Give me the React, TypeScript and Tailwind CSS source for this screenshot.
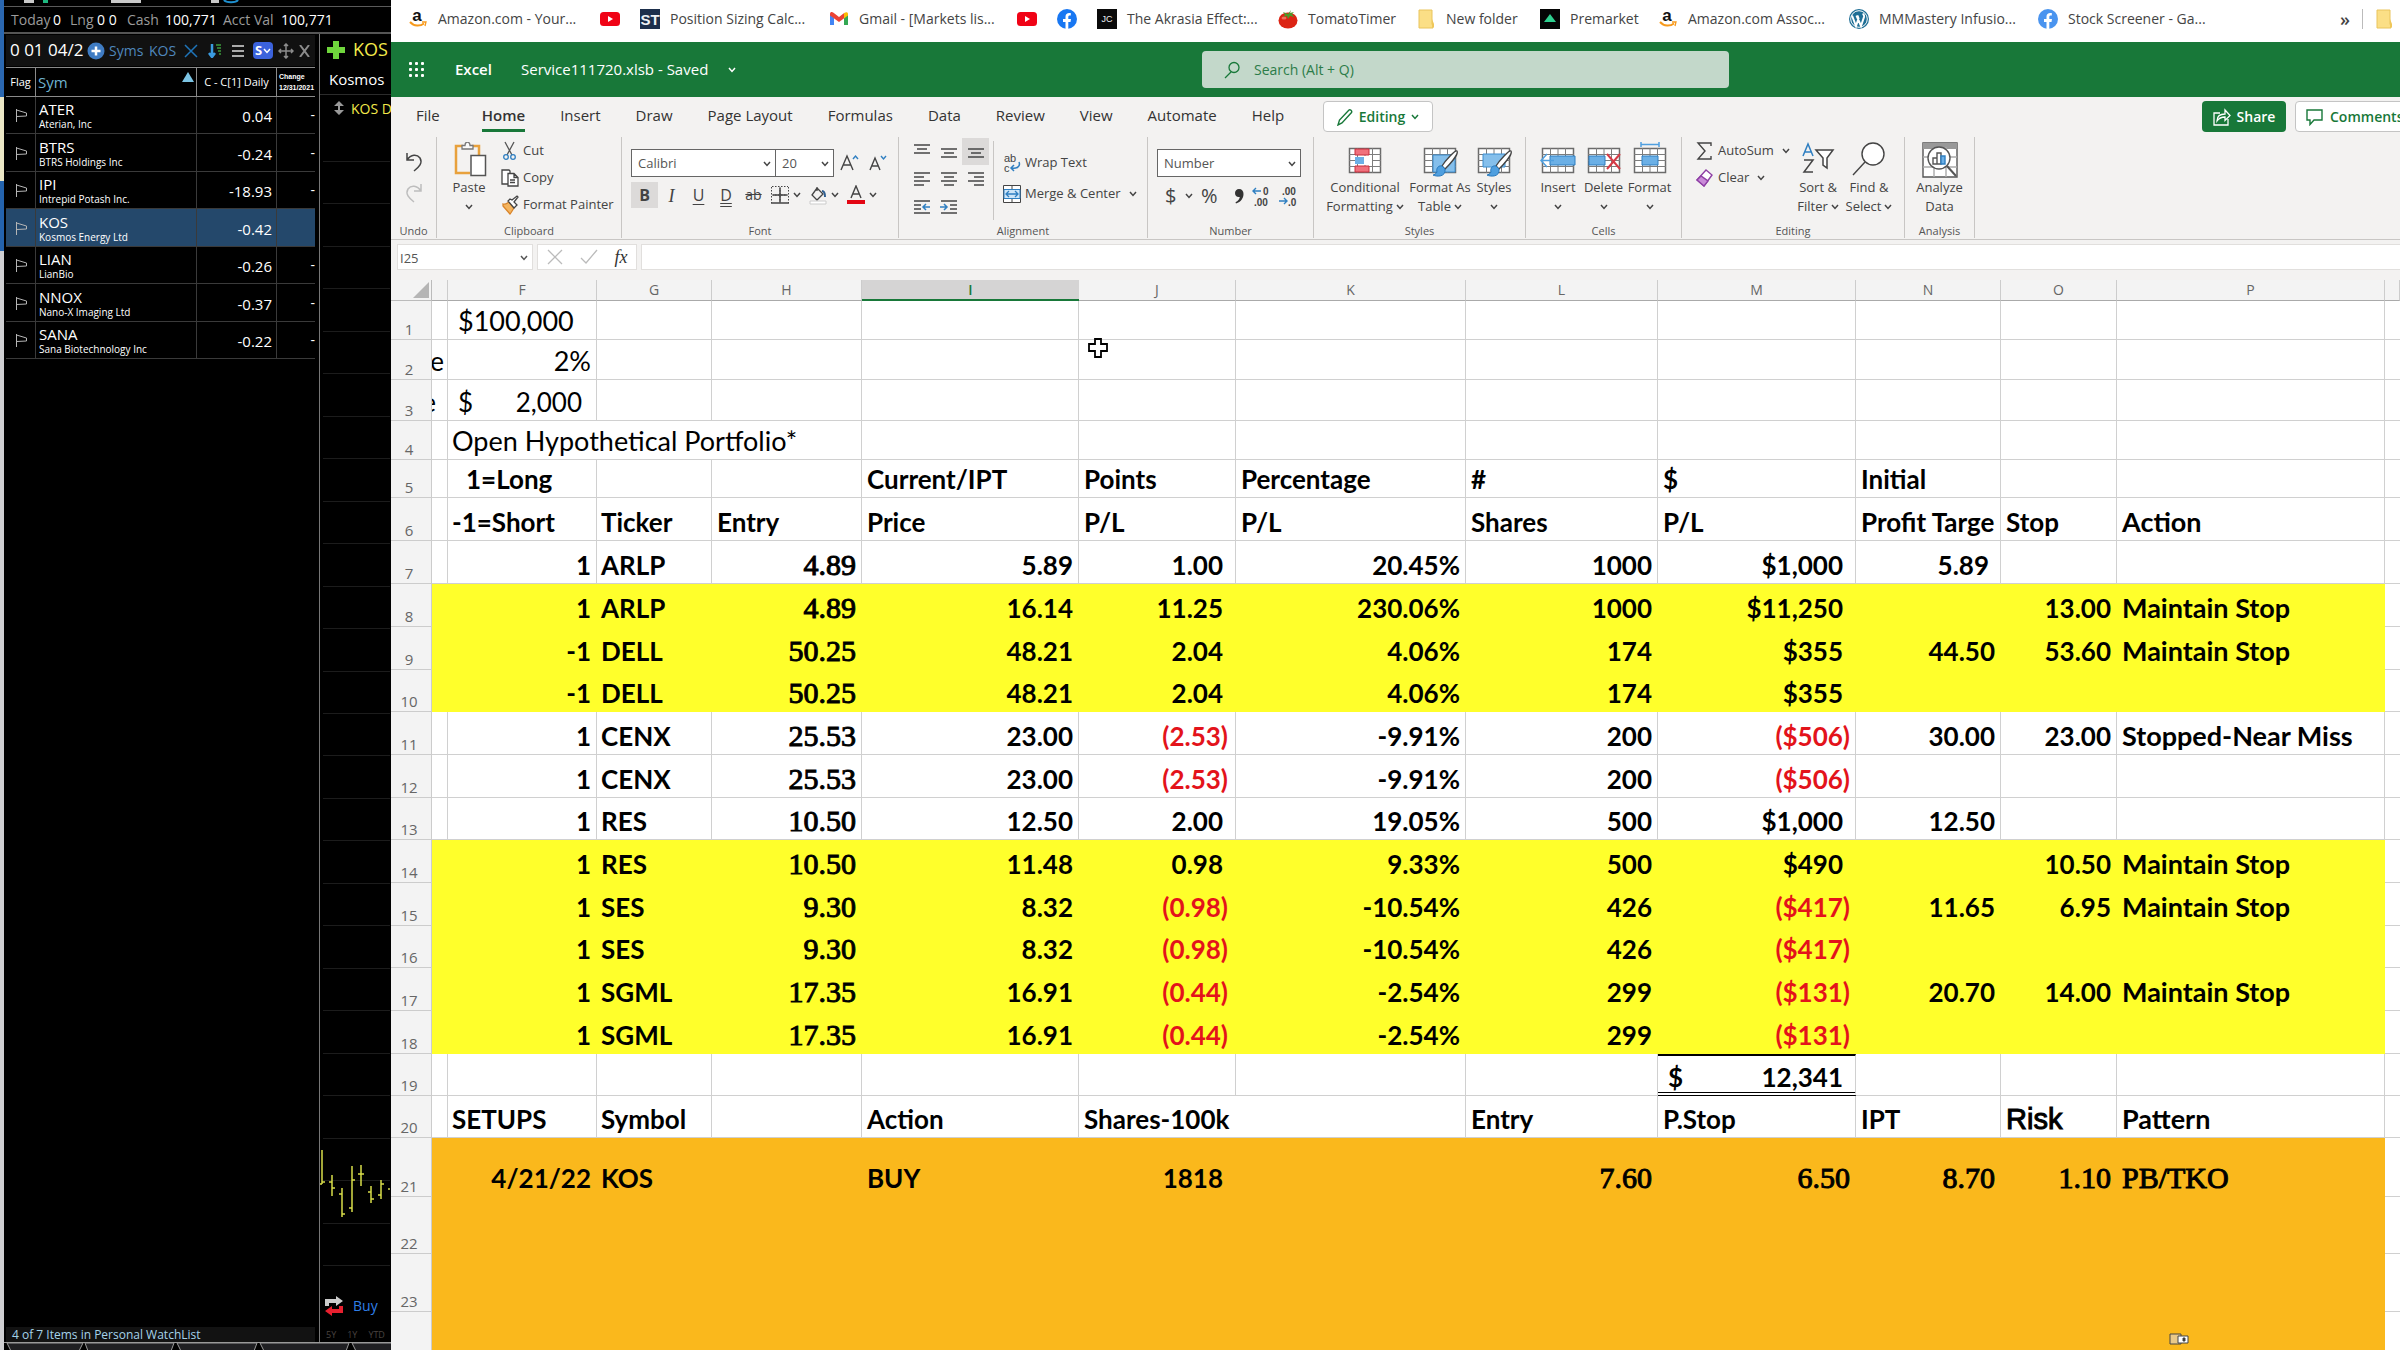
import type { ReactNode } from "react";

const ui = "font-['Open_Sans',sans-serif]";

/* ---------- small icons ---------- */

function Chevron({ className = "" }: { className?: string }) {
    return (
        <svg viewBox="0 0 8 6" className={`w-2 h-[6px] shrink-0 ${className}`} fill="none" stroke="currentColor" strokeWidth="1.5">
            <path d="M1 1l3 3.4L7 1" />
        </svg>
    );
}

function Amazon() {
    return (
        <svg viewBox="0 0 20 20" className="w-5 h-5">
            <text x="9" y="12" textAnchor="middle" fontSize="17" fontWeight="700" fontFamily="Liberation Sans" fill="#111">a</text>
            <path d="M2 13c4 4.500 10 4.500 14 1.500" stroke="#f79a1c" strokeWidth="2" fill="none" />
            <path d="M14 13h4l-1 4" stroke="#f79a1c" strokeWidth="1.300" fill="none" />
        </svg>
    );
}

function YouTube() {
    return (
        <svg viewBox="0 0 20 20" className="w-5 h-5">
            <rect y="3" width="20" height="14" rx="3.500" fill="#f00316" />
            <path d="M8 7v6l5-3z" fill="#fff" />
        </svg>
    );
}

function Tile({ text }: { text: string }) {
    const jc = text === "JC";
    return (
        <svg viewBox="0 0 20 20" className="w-5 h-5">
            <rect width="20" height="20" fill={jc ? "#0a0a0a" : "#1d2f4c"} />
            <text x="10" y={jc ? 13 : 16} textAnchor="middle" fontSize={jc ? 9 : 15} fontFamily="Liberation Sans" fontWeight={jc ? 400 : 700} fill="#eef1f5">{text}</text>
        </svg>
    );
}

function Gmail() {
    return (
        <svg viewBox="0 0 20 20" className="w-5 h-5">
            <path d="M1 5v11h4V9z" fill="#4285f4" />
            <path d="M19 5v11h-4V9z" fill="#34a853" />
            <path d="M1 5c0-2 2-2.500 3.500-1.200L10 8l5.500-4.200V9L10 13 4.500 9 1 6.500z" fill="#ea4335" />
            <path d="M15 4.200C17 2.500 19 3 19 5v1.500L15 9.500z" fill="#fbbc04" />
        </svg>
    );
}

function Facebook({ color = "#1877f2" }: { color?: string }) {
    return (
        <svg viewBox="0 0 20 20" className="w-5 h-5">
            <circle cx="10" cy="10" r="10" fill={color} />
            <path d="M8.500 20v-7H6v-3h2.500V7.800C8.500 5.200 10 4 12.200 4c.8 0 1.600.1 1.600.1v2.500h-1c-1.200 0-1.500.7-1.500 1.500V10H14l-.5 3h-2.200v7z" fill="#fff" />
        </svg>
    );
}

function Tomato() {
    return (
        <svg viewBox="0 0 20 20" className="w-5 h-5">
            <ellipse cx="10" cy="11.500" rx="9.500" ry="8" fill="#dc2414" />
            <ellipse cx="6" cy="9" rx="2.500" ry="1.500" fill="#f2705c" />
            <path d="M10 5L5 3l2 3-2 2 4-1 1 3 2-3 4 1-2-3 2-2-4 1 1-3z" fill="#4c9a2a" />
        </svg>
    );
}

function Folder() {
    return (
        <svg viewBox="0 0 20 20" className="w-5 h-5 shrink-0">
            <path d="M3 1h13v14l1 2v2H3z" fill="#fbdf86" stroke="#e9c45c" />
            <path d="M16 10v9l2-1v-3z" fill="#efc75a" />
        </svg>
    );
}

function Premarket() {
    return (
        <svg viewBox="0 0 20 20" className="w-5 h-5">
            <rect width="20" height="20" fill="#050505" />
            <path d="M10 5l6 8H4z" fill="#2fcf8f" />
        </svg>
    );
}

function WordPress() {
    return (
        <svg viewBox="0 0 20 20" className="w-5 h-5">
            <circle cx="10" cy="10" r="10" fill="#1f6f96" />
            <circle cx="10" cy="10" r="8.300" fill="none" stroke="#fff" />
            <path d="M3 6.500l4 10.500 2.500-7.500-1-3M7.500 6.500L12 17l3-9c.4-1.500-.6-2.500-1-3.500" fill="none" stroke="#fff" strokeWidth="2" />
        </svg>
    );
}

/* ---------- ribbon icons ---------- */

function GridIcon({ children, mark }: { children?: ReactNode; mark?: ReactNode }) {
    return (
        <svg viewBox="0 0 36 36" className="w-9 h-9">
            <rect x="2.500" y="6.500" width="31" height="24" fill="#fff" stroke="#6b6b6b" strokeWidth="1.500" />
            <path d="M10.500 6v25M18 6v25M25.500 6v25M2 12.500h32M2 18.500h32M2 24.500h32" stroke="#7d7d7d" />
            {children}
            {mark}
        </svg>
    );
}

function Brush() {
    return (
        <g>
            <path d="M35 9c-2-1-12 10-15 15l3 3c4-4 14-15 12-18z" fill="#fff" stroke="#444" strokeWidth="1.300" />
            <path d="M20 24c-4-1-6 3-5 6-1 2-3 3-4 3 4 2 13 2 12-6z" fill="#4f9fdf" stroke="#2779bd" />
        </g>
    );
}

function PasteIcon() {
    return (
        <svg viewBox="0 0 36 36" className="w-9 h-9" fill="none">
            <path d="M12 4H5v27H19M21 4h7v10" stroke="#e8a13c" strokeWidth="2.500" />
            <path d="M11 7h11V3.500h-3C19-1 14-1 14 3.500h-3z" fill="#fafafa" stroke="#777" strokeWidth="1.300" />
            <rect x="20" y="13.500" width="14.500" height="20" fill="#fff" stroke="#555" strokeWidth="1.500" />
        </svg>
    );
}

function CutIcon() {
    return (
        <svg viewBox="0 0 18 20" className="w-[18px] h-5" fill="none" strokeWidth="1.300">
            <path d="M4 1l7 13M13 1L6 14" stroke="#555" />
            <circle cx="5" cy="16" r="2.300" stroke="#2f7fc1" />
            <circle cx="12" cy="16" r="2.300" stroke="#2f7fc1" />
        </svg>
    );
}

function CopyIcon() {
    return (
        <svg viewBox="0 0 18 20" className="w-[18px] h-5" fill="#fff" stroke="#444" strokeWidth="1.300">
            <path d="M8 16H1V2h7l1 1v13z" />
            <path d="M7 5.500h6l4 4V18H7zM13 5.500v4h4M9 12h5M9 14.500h5" />
        </svg>
    );
}

function PainterIcon() {
    return (
        <svg viewBox="0 0 18 20" className="w-[18px] h-5" fill="none" strokeWidth="1.300">
            <path d="M2 9c3 1 4-1 6-2l5 6c-2 3-3 5-4 6L2 11z" fill="#f4b45e" stroke="#d9842a" />
            <path d="M7 6l6 7 3-3-3-3 4-5-1-1-5 4-2-1z" fill="#fff" stroke="#444" />
        </svg>
    );
}

function Lines({ rows, indent }: { rows: number[][]; indent?: "in" | "out" }) {
    return (
        <svg viewBox="0 0 18 18" className="w-[18px] h-[18px]" stroke="#444" strokeWidth="1.500" fill="none">
            {rows.map(([x, w], i) => (
                <path key={i} d={`M${x} ${3 + i * 4}h${w}`} />
            ))}
            {indent === "out" && <path d="M17 9h-6M13 6l-3 3 3 3" stroke="#2f7fc1" />}
            {indent === "in" && <path d="M0 9h6M4 6l3 3-3 3" stroke="#2f7fc1" />}
        </svg>
    );
}

function Flag() {
    return (
        <svg viewBox="0 0 12 14" className="w-3 h-[14px] mx-auto" fill="none" stroke="#b5b5b5">
            <path d="M1.500 1v13M1.500 2l10 3v3l-10 .5" />
        </svg>
    );
}

/* ---------- trading platform on the left ---------- */

const watchlist = [
    { sym: "ATER", name: "Aterian, Inc", diff: "0.04" },
    { sym: "BTRS", name: "BTRS Holdings Inc", diff: "-0.24" },
    { sym: "IPI", name: "Intrepid Potash Inc.", diff: "-18.93" },
    { sym: "KOS", name: "Kosmos Energy Ltd", diff: "-0.42", active: true },
    { sym: "LIAN", name: "LianBio", diff: "-0.26" },
    { sym: "NNOX", name: "Nano-X Imaging Ltd", diff: "-0.37" },
    { sym: "SANA", name: "Sana Biotechnology Inc", diff: "-0.22" },
];

// x, high, low, open, close
const bars = [
    [1, 1149, 1183, 1183, 1181],
    [11, 1174, 1195, 1181, 1187],
    [21, 1187, 1216, 1193, 1213],
    [31, 1165, 1211, 1207, 1179],
    [40, 1164, 1185, 1173, 1173],
    [50, 1185, 1202, 1191, 1198],
    [60, 1179, 1198, 1194, 1183],
    [70, 1188, 1188, 1188, 1188],
];

function Watchlist() {
    return (
        <section className="w-[309px] ml-[2px] flex flex-col">
            <div className="h-[31px] mt-[1px] bg-[#111] flex items-center text-sm text-[#4f87bd]">
                <span className="text-white text-[17px] w-[80px] pl-1 whitespace-nowrap">0 01 04/2</span>
                <button aria-label="Add symbol" className="w-[19px] ml-[1px]">
                    <svg viewBox="0 0 18 18" className="w-[18px] h-[18px]"><circle cx="9" cy="9" r="8.500" fill="#3f7cc4" /><path d="M9 4.500v9M4.500 9h9" stroke="#fff" strokeWidth="2.500" /></svg>
                </button>
                <button className="w-[40px] text-left pl-[3px]">Syms</button>
                <button className="w-[38px] text-left pl-[3px]">KOS</button>
                <svg viewBox="0 0 14 14" className="w-[14px] h-[14px]" stroke="#1f74b8" strokeWidth="1.500"><path d="M1 1l12 12M13 1L1 13" /></svg>
                <svg viewBox="0 0 14 14" className="w-[14px] h-[14px] ml-[10px]"><path d="M4 0v12M1 9l3 4 3-4" stroke="#3a9be0" strokeWidth="2.500" fill="none" /><path d="M8 1h5M9 4h4M10 7h3M11 10h2" stroke="#3b9a3b" strokeWidth="1.500" /></svg>
                <svg viewBox="0 0 12 14" className="w-3 h-[14px] ml-[10px]" stroke="#aaa" strokeWidth="2"><path d="M0 2h12M0 7h12M0 12h12" /></svg>
                <button aria-label="Symbol link" className="ml-[9px] w-[20px] h-[17px] rounded-sm bg-[#3b62dc] text-white text-[13px] leading-[17px] font-bold flex items-center justify-center">
                    S<Chevron className="ml-px" />
                </button>
                <svg viewBox="0 0 16 16" className="w-4 h-4 ml-[5px]" stroke="#8c8c8c" strokeWidth="1.500" fill="none"><path d="M8 1v14M1 8h14M6 3l2-2 2 2M6 13l2 2 2-2M3 6L1 8l2 2M13 6l2 2-2 2" /></svg>
                <svg viewBox="0 0 12 12" className="w-3 h-3 ml-[5px]" stroke="#8c8c8c" strokeWidth="2"><path d="M1 0l9 12M10 0L1 12" /></svg>
            </div>
            <table className="table-fixed w-full mt-px border-separate border-spacing-0 text-white">
                <colgroup>
                    <col className="w-[30px]" />
                    <col className="w-[161px]" />
                    <col className="w-[80px]" />
                    <col className="w-[38px]" />
                </colgroup>
                <thead>
                    <tr className="h-[30px] text-[11px] leading-[14px] [&>th]:font-normal [&>th]:border-y [&>th]:border-[#8a8a8a] [&>th]:p-0 [&>th]:whitespace-nowrap">
                        <th className="border-r">Flag</th>
                        <th className="border-r">
                            <div className="flex justify-between px-[2px]">
                                <span className="text-[15px] leading-5 text-[#6fb3cf]">Sym</span>
                                <svg viewBox="0 0 12 10" className="w-3 h-[10px]"><path d="M6 0l6 10H0z" fill="#7cc4e4" /></svg>
                            </div>
                        </th>
                        <th className="border-r">C - C[1] Daily</th>
                        <th className="text-left pl-[2px]! text-[7px] leading-[11px] font-bold! font-['Liberation_Sans',sans-serif]">
                            Change<br />12/31/2021
                        </th>
                    </tr>
                </thead>
                <tbody>
                    {watchlist.map((row) => (
                        <tr
                            key={row.sym}
                            className={`h-[37px] even:h-[38px] [&>td]:border-b [&>td]:border-[#3a3a3a] [&>td]:p-0 ${row.active ? "bg-[#24486b]" : ""}`}
                        >
                            <td className="border-r"><Flag /></td>
                            <td className="border-r">
                                <div className="pl-[3px] pt-[2px] text-[15px] leading-[17px]">{row.sym}</div>
                                <div className="pl-[3px] text-[10px] leading-[13px]">{row.name}</div>
                            </td>
                            <td className="border-r text-right text-[15px]"><div className="pr-1 pt-[3px]">{row.diff}</div></td>
                            <td className="text-right text-sm">{row.active ? "" : "-"}</td>
                        </tr>
                    ))}
                </tbody>
            </table>
            <div className="mt-auto h-[15px] bg-[#121212] pl-[6px] text-xs leading-[15px] text-[#a5d3ea]">4 of 7 Items in Personal WatchList</div>
        </section>
    );
}

function ChartPane() {
    return (
        <section className="flex-1 min-w-0 ml-[4px] border-l border-[#777] flex flex-col overflow-hidden whitespace-nowrap text-[#f2e94a]">
            <div className="flex items-center gap-2 h-[31px] pl-[7px] text-[18px]">
                <svg viewBox="0 0 18 18" className="w-[18px] h-[18px] shrink-0"><path d="M6 0h6v6h6v6h-6v6H6v-6H0V6h6z" fill="#6fd63c" /></svg>
                KOS
            </div>
            <div className="h-[30px] pl-[9px] text-[15px] leading-[28px] text-white border-b border-[#2c2c2c]">Kosmos</div>
            <div className="flex items-center gap-[7px] h-[26px] pl-[14px] text-[14px]">
                <svg viewBox="0 0 10 14" className="w-[10px] h-[14px] shrink-0" fill="#999"><path d="M5 0l5 5H6v4h4l-5 5-5-5h4V5H0z" /></svg>
                KOS D
            </div>
            <svg viewBox="0 120 70 1170" className="w-[70px] h-[1170px] shrink-0" fill="none">
                {Array.from({ length: 27 }, (_, i) => (
                    <path key={i} d={`M3 ${160.5 + Math.round(i * 42.46)}h68`} stroke="#1c1c1c" />
                ))}
                {bars.map(([x, high, low, open, close]) => (
                    <path key={x} d={`M${x + 1} ${high}V${low}M${x - 2} ${open}h3M${x + 1} ${close}h3`} stroke="#d8dd4a" strokeWidth="1.500" />
                ))}
            </svg>
            <div className="flex items-center gap-[9px] h-[30px] pl-1 text-sm text-[#2f7fe8]">
                <svg viewBox="0 0 20 20" className="w-5 h-5 shrink-0">
                    <path d="M1 3h11V0l7 5-7 5V7H5v3H1z" fill="#ccc" />
                    <path d="M19 17H8v3l-7-5 7-5v3h7v-3h4z" fill="#e8202f" />
                </svg>
                Buy
            </div>
            <div className="mt-auto mb-px pl-[6px] flex gap-[11px] text-[9px] leading-[12px] text-[#4a4440]">
                <span>5Y</span><span>1Y</span><span>YTD</span>
            </div>
        </section>
    );
}

function TradingPlatform() {
    return (
        <aside className={`${ui} w-[391px] shrink-0 flex bg-black`}>
            <div className="w-1 flex flex-col">
                <div className="h-[97px] bg-[#2a67b0]" />
                <div className="h-[84px] bg-[#ebe7c6]" />
                <div className="h-[70px] bg-[#2463ad]" />
                <div className="flex-1 bg-[#cfcfd2]" />
            </div>
            <div className="flex-1 min-w-0 flex flex-col">
                <svg viewBox="0 0 387 7" className="h-[7px] w-full">
                    <path d="M20 0h10v3H20zM107 0h30v3h-30zM207 0h8v3h-8z" fill="#c9c9c9" />
                    <path d="M39 0h5v3h-5z" fill="#1eb980" />
                    <path d="M220 0c2 3 12 3 14 0" stroke="#1e90d0" strokeWidth="2" fill="none" />
                    <path d="M0 6.500h387" stroke="#5a5a5a" />
                </svg>
                <div className="h-[27px] border-b-2 border-[#555] flex items-center pl-[7px] text-sm text-[#9b9b9b] whitespace-nowrap">
                    <span className="w-[42px]">Today</span><b className="w-[17px] font-normal text-white">0</b>
                    <span className="w-[27px]">Lng</span><b className="w-[30px] font-normal text-white">0 0</b>
                    <span className="w-[38px]">Cash</span><b className="w-[58px] font-normal text-white">100,771</b>
                    <span className="w-[58px]">Acct Val</span><b className="font-normal text-white">100,771</b>
                </div>
                <div className="flex-1 flex">
                    <Watchlist />
                    <ChartPane />
                </div>
                <svg viewBox="0 0 387 8" className="h-[8px] w-full" fill="#1f1f22" stroke="#999">
                    <path d="M3 1h76l-4 8H7zM81 1h89l-3 8H84z" />
                    <path d="M173 1h80l-3 8h-73zM256 1h89l-3 8h-82zM348 1h50v8h-46z" />
                    <path d="M0 .5h387" />
                </svg>
            </div>
        </aside>
    );
}

/* ---------- browser bookmarks ---------- */

const bookmarks = [
    { icon: <Amazon />, label: "Amazon.com - Your...", width: "w-[192px]" },
    { icon: <YouTube />, label: "", width: "w-[40px]" },
    { icon: <Tile text="ST" />, label: "Position Sizing Calc...", width: "w-[189px]" },
    { icon: <Gmail />, label: "Gmail - [Markets lis...", width: "w-[188px]" },
    { icon: <YouTube />, label: "", width: "w-[40px]" },
    { icon: <Facebook />, label: "", width: "w-[40px]" },
    { icon: <Tile text="JC" />, label: "The Akrasia Effect:...", width: "w-[181px]" },
    { icon: <Tomato />, label: "TomatoTimer", width: "w-[138px]" },
    { icon: <Folder />, label: "New folder", width: "w-[124px]" },
    { icon: <Premarket />, label: "Premarket", width: "w-[118px]" },
    { icon: <Amazon />, label: "Amazon.com Assoc...", width: "w-[191px]" },
    { icon: <WordPress />, label: "MMMastery Infusio...", width: "w-[189px]" },
    { icon: <Facebook color="#4a94ef" />, label: "Stock Screener - Ga...", width: "w-[189px]" },
];

function Bookmarks() {
    return (
        <nav className="h-[42px] pb-1 pl-[17px] pr-[6px] flex items-center bg-white text-sm text-[#444] whitespace-nowrap">
            {bookmarks.map((b, i) => (
                <a key={i} href="#" aria-label={b.label || "Bookmark"} className={`${b.width} flex items-center gap-[10px]`}>
                    {b.icon}
                    {b.label}
                </a>
            ))}
            <button className="ml-auto text-lg leading-5 font-semibold">»</button>
            <span className="h-5 border-l border-[#bbb] ml-[12px] mr-[11px]" />
            <Folder />
        </nav>
    );
}

/* ---------- Excel chrome ---------- */

function TitleBar() {
    return (
        <header className="h-[55px] bg-[#187839] flex items-center pl-[17px] text-[15px] text-white whitespace-nowrap">
            <button aria-label="App launcher">
                <svg viewBox="0 0 18 18" className="w-[18px] h-[18px]" fill="#fff">
                    {[1, 7, 13].map((y) => [1, 7, 13].map((x) => <rect key={`${x}${y}`} x={x} y={y} width="3" height="3" rx="1" />))}
                </svg>
            </button>
            <span className="w-[66px] ml-[29px] font-semibold">Excel</span>
            <button className="w-[681px] flex items-center gap-5">
                Service111720.xlsb - Saved
                <Chevron />
            </button>
            <label className="w-[527px] h-[37px] rounded-sm bg-[#c3d8ca] flex items-center gap-[14px] pl-[22px] text-sm text-[#187839]">
                <svg viewBox="0 0 16 18" className="w-4 h-[18px]" fill="none" stroke="currentColor" strokeWidth="1.300"><circle cx="10" cy="6.500" r="5" /><path d="M7 11l-6 6" /></svg>
                <input aria-label="Search" placeholder="Search (Alt + Q)" className="flex-1 bg-transparent outline-none placeholder:text-[#2c7c48]" />
            </label>
        </header>
    );
}

const tabs = ["Insert", "Draw", "Page Layout", "Formulas", "Data", "Review", "View", "Automate", "Help"];

function Tabs() {
    return (
        <div className="h-[40px] flex items-start pl-[25px] text-[15px] text-[#333] whitespace-nowrap overflow-hidden">
            <div className="flex items-start gap-[35px] leading-[36px] w-[907px]">
                <button className="mr-[7px]">File</button>
                <button className="font-semibold h-[35px] border-b-3 border-[#187839]">Home</button>
                {tabs.map((t) => <button key={t}>{t}</button>)}
            </div>
            <button className="mt-1 h-[31px] w-[110px] border border-[#c4c4c4] rounded-sm bg-white text-sm text-[#187839] font-semibold flex items-center justify-center gap-[6px]">
                <svg viewBox="0 0 16 18" className="w-4 h-[18px]" fill="none" stroke="currentColor" strokeWidth="1.400"><path d="M1 17l1.500-5L12 2c1-1 3.500 1 2.500 2.500L5 15z" /></svg>
                Editing
                <Chevron />
            </button>
            <button className="mt-1 ml-auto h-[31px] w-[84px] shrink-0 rounded-sm bg-[#187839] text-sm text-white font-semibold flex items-center justify-center gap-[6px]">
                <svg viewBox="0 0 18 18" className="w-[18px] h-[18px]" fill="none" stroke="currentColor" strokeWidth="1.300"><path d="M7 5H1v12h14v-6M4 13c0-5 3-7 8-7V2l5 5.500-5 5V9c-4 0-6 1-8 4z" /></svg>
                Share
            </button>
            <div className="w-[114px] shrink-0 overflow-hidden">
                <button className="mt-1 ml-[9px] h-[31px] w-[132px] border border-[#c4c4c4] rounded-sm bg-white text-sm text-[#187839] font-semibold flex items-center gap-[6px] pl-[10px]">
                    <svg viewBox="0 0 18 18" className="w-[18px] h-[18px]" fill="none" stroke="currentColor" strokeWidth="1.400"><path d="M1 2h15v10H8l-4 4.500V12H1z" /></svg>
                    Comments
                </button>
            </div>
        </div>
    );
}

function Group({ label, width, children }: { label: string; width: string; children: ReactNode }) {
    return (
        <section className={`${width} shrink-0 h-[101px] border-r border-[#c8c6c4] flex flex-col`}>
            <div className="flex-1 flex">{children}</div>
            <div className="text-center text-[11px] leading-[14px] text-[#555]">{label}</div>
        </section>
    );
}

function Big({ icon, lines, width, arrow }: { icon: ReactNode; lines: string[]; width: string; arrow?: boolean }) {
    return (
        <button className={`${width} pt-[5px] shrink-0 flex flex-col items-center text-[13px] leading-[19px] whitespace-nowrap`}>
            {icon}
            {lines.map((l, i) => (
                <span key={l} className="flex items-center gap-[3px]">
                    {l}
                    {arrow && i === 1 && <Chevron />}
                </span>
            ))}
            {arrow && lines.length === 1 && <Chevron className="mt-[7px]" />}
        </button>
    );
}

function Small({ icon, label, arrow, height = "h-[27px]" }: { icon: ReactNode; label: string; arrow?: boolean; height?: string }) {
    return (
        <button className={`${height} flex items-center gap-1 text-[13px] whitespace-nowrap`}>
            {icon}
            {label}
            {arrow && <Chevron className="ml-1" />}
        </button>
    );
}

function Drop({ label, value, width }: { label: string; value: string; width: string }) {
    return (
        <div className={`${width} relative h-[28px] border border-[#666] bg-white`}>
            <select aria-label={label} className="appearance-none w-full h-full pl-[6px] text-[13px] text-[#555] bg-transparent">
                <option>{value}</option>
            </select>
            <Chevron className="absolute right-1 top-[11px] pointer-events-none" />
        </div>
    );
}

function Ribbon() {
    return (
        <div className="h-[103px] border-b border-[#c8c6c4] flex text-[#444]">
            <Group label="Undo" width="w-[46px]">
                <div className="flex-1 flex flex-col items-center pt-[15px] gap-[11px]">
                    <button aria-label="Undo"><svg viewBox="0 0 18 20" className="w-[18px] h-5" fill="none" stroke="#444" strokeWidth="1.500"><path d="M2 1v7h7M2 8c4-6 10-6 13-2 3 5-1 9-6 13" /></svg></button>
                    <button aria-label="Redo"><svg viewBox="0 0 18 20" className="w-[18px] h-5" fill="none" stroke="#bdbdbd" strokeWidth="1.500"><path d="M16 1v7H9M16 8C12 2 6 2 3 6c-3 5 1 9 6 13" /></svg></button>
                </div>
            </Group>
            <Group label="Clipboard" width="w-[185px]">
                <Big icon={<PasteIcon />} lines={["Paste"]} width="w-[52px] ml-[6px]" arrow />
                <div className="ml-[6px]">
                    <Small icon={<CutIcon />} label="Cut" />
                    <Small icon={<CopyIcon />} label="Copy" />
                    <Small icon={<PainterIcon />} label="Format Painter" />
                </div>
            </Group>
            <Group label="Font" width="w-[277px]">
                <div className="pl-[9px] pt-[12px]">
                    <div className="flex items-center">
                        <Drop label="Font" value="Calibri" width="w-[145px]" />
                        <Drop label="Font size" value="20" width="w-[59px] -ml-px" />
                        <button aria-label="Increase font size" className="w-[28px] ml-[5px]">
                            <svg viewBox="0 0 20 20" className="w-5 h-5" fill="none" stroke="#444" strokeWidth="1.400"><path d="M2 17L8 3l6 14M4 12h8" /><path d="M14 6l2.500-3L19 6" stroke="#2f7fc1" /></svg>
                        </button>
                        <button aria-label="Decrease font size" className="w-[28px]">
                            <svg viewBox="0 0 20 20" className="w-5 h-5" fill="none" stroke="#444" strokeWidth="1.400"><path d="M3 17L8 5l5 12M5 13h6" /><path d="M14 3l2.500 3L19 3" stroke="#2f7fc1" /></svg>
                        </button>
                    </div>
                    <div className="flex items-center mt-[5px] text-base [&>button]:h-[26px]">
                        <button className="w-[27px] bg-[#dcdad9] font-bold">B</button>
                        <button className="w-[27px] font-['Liberation_Serif',serif] italic text-lg">I</button>
                        <button className="w-[27px] underline underline-offset-3">U</button>
                        <button className="w-[28px] underline decoration-double underline-offset-2">D</button>
                        <button className="w-[27px] line-through text-sm">ab</button>
                        <button aria-label="Borders" className="w-[38px] flex items-center gap-1 pl-1">
                            <svg viewBox="0 0 18 18" className="w-[18px] h-[18px]" stroke="#444" fill="none"><path d="M1 .5h16M.5 1v16M17.500 1v16M9 1v16M1 9h16" strokeDasharray="1.500 1.500" /><path d="M0 17h18M2 9h14M9 2v14" strokeWidth="1.500" /></svg>
                            <Chevron />
                        </button>
                        <button aria-label="Fill color" className="w-[38px] flex items-center gap-1 pl-1">
                            <svg viewBox="0 0 18 20" className="w-[18px] h-5" fill="none" stroke="#444" strokeWidth="1.300"><path d="M8 2v4M8 3l6 6-6 6-5-5z" /><path d="M13 6c3 0 3 3 3 6" stroke="#2f5f91" strokeWidth="2" /><path d="M1 16h16v3H1z" fill="#fff" stroke="#ccc" strokeWidth="1" /></svg>
                            <Chevron />
                        </button>
                        <button aria-label="Font color" className="w-[38px] flex items-center gap-1 pl-1">
                            <svg viewBox="0 0 18 20" className="w-[18px] h-5" fill="none" stroke="#444" strokeWidth="1.400"><path d="M4 13L9 1l5 12M6 9h6" /><path d="M0 15h18v4H0z" fill="#e30613" stroke="none" /></svg>
                            <Chevron />
                        </button>
                    </div>
                </div>
            </Group>
            <Group label="Alignment" width="w-[249px]">
                <div className="ml-[9px] grid grid-cols-[27px_27px_27px] auto-rows-[28px] place-items-center [&>button]:w-[27px] [&>button]:h-[27px] [&>button]:flex [&>button]:items-center [&>button]:justify-center">
                    <button aria-label="Top align"><Lines rows={[[1, 16], [4, 10], [1, 16]]} /></button>
                    <button aria-label="Middle align"><Lines rows={[[0, 0], [1, 16], [4, 10], [1, 16]]} /></button>
                    <button aria-label="Bottom align" className="bg-[#dcdad9]"><Lines rows={[[0, 0], [1, 16], [4, 10], [1, 16]]} /></button>
                    <button aria-label="Align left"><Lines rows={[[1, 16], [1, 10], [1, 16], [1, 10]]} /></button>
                    <button aria-label="Center"><Lines rows={[[1, 16], [4, 10], [1, 16], [4, 10]]} /></button>
                    <button aria-label="Align right"><Lines rows={[[1, 16], [7, 10], [1, 16], [7, 10]]} /></button>
                    <button aria-label="Decrease indent"><Lines rows={[[1, 16], [1, 7], [1, 7], [1, 16]]} indent="out" /></button>
                    <button aria-label="Increase indent"><Lines rows={[[1, 16], [10, 7], [10, 7], [1, 16]]} indent="in" /></button>
                </div>
                <div className="mt-1 ml-1 h-[79px] border-l border-[#c8c6c4] pl-[9px] pt-[6px]">
                    <Small
                        height="h-[31px]"
                        label="Wrap Text"
                        icon={<svg viewBox="0 0 18 20" className="w-[18px] h-5" fill="none"><text x="1" y="9" fontSize="11" fontFamily="Liberation Sans" fill="#444">ab</text><text x="1" y="19" fontSize="11" fontFamily="Liberation Sans" fill="#444">c</text><path d="M16 9c2 5-3 7-8 6M11 12l-3 3 3 3" stroke="#2f7fc1" strokeWidth="1.500" /></svg>}
                    />
                    <Small
                        height="h-[31px]"
                        label="Merge & Center"
                        arrow
                        icon={<svg viewBox="0 0 18 20" className="w-[18px] h-5" fill="#fff" stroke="#444"><path d="M.5 1.500h17v17H.5zM9 1v4M9 15v4" /><path d="M1 5.500h16v9H1z" fill="#cfe6f8" stroke="#2f7fc1" /><path d="M3 10h12M6 7l-3 3 3 3M12 7l3 3-3 3" fill="none" stroke="#2f7fc1" strokeWidth="1.300" /></svg>}
                    />
                </div>
            </Group>
            <Group label="Number" width="w-[166px]">
                <div className="pl-[9px] pt-[12px]">
                    <Drop label="Number format" value="Number" width="w-[144px]" />
                    <div className="flex items-center mt-[6px] pl-2 text-xl leading-[26px]">
                        <button className="flex items-center gap-[9px] w-[36px]">$<Chevron /></button>
                        <button className="w-[25px] text-left">%</button>
                        <button aria-label="Comma style" className="w-[26px] flex justify-center">
                            <svg viewBox="0 0 10 16" className="w-[10px] h-4"><path d="M5 1c3 0 4.500 2 4.500 5C9.500 10 7 14 2 15.500l-.5-1.300C4 13 5.500 11 5.800 9 3 9.500 1 8 1 5c0-2.300 1.700-4 4-4z" fill="#333" /></svg>
                        </button>
                        <button aria-label="Increase decimal" className="w-[27px]">
                            <svg viewBox="0 0 20 20" className="w-5 h-5"><path d="M1 5h8M4 2L1 5l3 3" stroke="#2f7fc1" strokeWidth="1.400" fill="none" /><text x="11" y="9" fontSize="10" fontFamily="Liberation Sans" fontWeight="700" fill="#444">0</text><text x="2" y="20" fontSize="10" fontFamily="Liberation Sans" fontWeight="700" fill="#444">.00</text></svg>
                        </button>
                        <button aria-label="Decrease decimal" className="w-[22px]">
                            <svg viewBox="0 0 20 20" className="w-5 h-5"><path d="M0 15h8M5 12l3 3-3 3" stroke="#2f7fc1" strokeWidth="1.400" fill="none" /><text x="3" y="9" fontSize="10" fontFamily="Liberation Sans" fontWeight="700" fill="#444">.00</text><text x="9" y="20" fontSize="10" fontFamily="Liberation Sans" fontWeight="700" fill="#444">.0</text></svg>
                        </button>
                    </div>
                </div>
            </Group>
            <Group label="Styles" width="w-[212px]">
                <Big
                    width="w-[86px] ml-[8px]"
                    lines={["Conditional", "Formatting"]}
                    arrow
                    icon={<GridIcon><path d="M8 7h14v6H8zM8 24h14v6H8z" fill="#f0717c" stroke="#c9303e" /><path d="M8 15h9v7H8z" fill="#6cb0e6" /><path d="M17 14h8v9h-8z" fill="#fff" /></GridIcon>}
                />
                <Big width="w-[64px]" lines={["Format As", "Table"]} arrow icon={<GridIcon mark={<Brush />}><path d="M11 13h22v17H11z" fill="#85bfeb" stroke="#3d8ed0" /></GridIcon>} />
                <Big width="w-[44px]" lines={["Styles"]} arrow icon={<GridIcon mark={<Brush />}><path d="M7 12h22v13H7z" fill="#85bfeb" stroke="#3d8ed0" /></GridIcon>} />
            </Group>
            <Group label="Cells" width="w-[156px]">
                <Big width="w-[46px] ml-[9px]" lines={["Insert"]} arrow icon={<GridIcon><path d="M10 14h25v9H10z" fill="#6cb0e6" stroke="#2f7fc1" /><path d="M14 18.500H1M7 12l-6 6.500L7 25" fill="none" stroke="#4f9fdf" strokeWidth="1.500" /></GridIcon>} />
                <Big width="w-[45px]" lines={["Delete"]} arrow icon={<GridIcon><path d="M3 14h16v9H3z" fill="#6cb0e6" stroke="#2f7fc1" /><path d="M21 12l13 15M34 12L21 27" stroke="#d63a46" strokeWidth="2" /></GridIcon>} />
                <Big width="w-[47px]" lines={["Format"]} arrow icon={<GridIcon><path d="M10 14h16v9H10z" fill="#6cb0e6" stroke="#2f7fc1" /><path d="M9 2.500h18M9 0v5M27 0v5" stroke="#4f9fdf" strokeWidth="1.500" /></GridIcon>} />
            </Group>
            <Group label="Editing" width="w-[223px]">
                <div className="w-[103px] ml-[14px]">
                    <Small icon={<svg viewBox="0 0 18 20" className="w-[18px] h-5" fill="none" stroke="#444" strokeWidth="1.400"><path d="M15 5V2H2l7 8-7 8h13v-3" /></svg>} label="AutoSum" arrow />
                    <Small icon={<svg viewBox="0 0 18 20" className="w-[18px] h-5" fill="#fff" stroke="#8e3fa5" strokeWidth="1.400"><path d="M1 12L10 2l6 5-8 11z" /><path d="M1 12l4-4 7 5-4 5z" fill="#c98bd8" /></svg>} label="Clear" arrow />
                </div>
                <Big
                    width="w-[50px] -ml-[6px]"
                    lines={["Sort &", "Filter"]}
                    arrow
                    icon={<svg viewBox="0 0 36 36" className="w-9 h-9" fill="none" strokeWidth="1.500"><path d="M3 14L8 2l5 12M5 10h6" stroke="#2f7fc1" /><path d="M4 18h9L4 30h9" stroke="#444" /><path d="M16 8h17l-6 8v10l-4-3v-7z" fill="#fff" stroke="#444" /></svg>}
                />
                <Big
                    width="w-[52px]"
                    lines={["Find &", "Select"]}
                    arrow
                    icon={<svg viewBox="0 0 36 36" className="w-9 h-9" fill="#fff" stroke="#444" strokeWidth="1.400"><circle cx="22" cy="12" r="11" /><path d="M14 20L2 33" /></svg>}
                />
            </Group>
            <Group label="Analysis" width="w-[70px]">
                <Big
                    width="w-[69px]"
                    lines={["Analyze", "Data"]}
                    icon={<svg viewBox="0 0 36 36" className="w-9 h-9" fill="#fff" stroke="#555" strokeWidth="1.400"><path d="M1 1h34v34H1z" /><path d="M1 4h34" strokeWidth="6" stroke="#999" /><path d="M1 15h34M1 25h34M12 5v30M24 5v30" stroke="#aaa" /><circle cx="17" cy="16" r="11" /><path d="M25 24l9 10" strokeWidth="2" /><path d="M11 16h4v6h-4zM15 11h4v11h-4z" /><path d="M19 14h4v8h-4z" fill="#6cb0e6" stroke="#2f7fc1" /></svg>}
                />
            </Group>
        </div>
    );
}

function FormulaBar() {
    return (
        <div className="h-[40px] pt-1 pl-[6px] flex gap-1 text-[#555]">
            <div className="relative w-[136px] h-[26px] bg-white border border-[#e1dfdd]">
                <input aria-label="Name box" defaultValue="I25" className="w-full h-full pl-[2px] text-[13px] outline-none" />
                <Chevron className="absolute right-1 top-[10px]" />
            </div>
            <div className="w-[100px] h-[26px] bg-white border border-[#e1dfdd] flex items-center justify-around">
                <svg viewBox="0 0 16 16" className="w-4 h-4" stroke="#bbb" strokeWidth="1.300"><path d="M1 1l14 14M15 1L1 15" /></svg>
                <svg viewBox="0 0 18 16" className="w-[18px] h-4" stroke="#bbb" strokeWidth="1.300" fill="none"><path d="M1 9l5 5L17 1" /></svg>
                <button className="font-['Liberation_Serif',serif] italic text-[18px] leading-5 text-[#333]">fx</button>
            </div>
            <input aria-label="Formula" className="flex-1 h-[26px] bg-white border border-r-0 border-[#e1dfdd] outline-none" />
        </div>
    );
}

/* ---------- worksheet ---------- */

const columns = [
    { name: "", width: "w-[16px]" },
    { name: "F", width: "w-[149px]" },
    { name: "G", width: "w-[115px]" },
    { name: "H", width: "w-[150px]" },
    { name: "I", width: "w-[217px]" },
    { name: "J", width: "w-[157px]" },
    { name: "K", width: "w-[230px]" },
    { name: "L", width: "w-[192px]" },
    { name: "M", width: "w-[198px]" },
    { name: "N", width: "w-[145px]" },
    { name: "O", width: "w-[116px]" },
    { name: "P", width: "w-[268px]" },
    { name: "", width: "" },
];

type Row = { h: string; fill?: "yellow" | "orange"; cells: string[] };

// cells run from column F to column P
const rows: Row[] = [
    { h: "h-[39px]", cells: ["$100,000"] },
    { h: "h-[40px]", cells: ["2%"] },
    { h: "h-[41px]", cells: ["$|2,000"] },
    { h: "h-[39px]", cells: ["Open Hypothetical Portfolio*"] },
    { h: "h-[38px]", cells: ["1=Long", "", "", "Current/IPT", "Points", "Percentage", "#", "$", "Initial"] },
    { h: "h-[43px]", cells: ["-1=Short", "Ticker", "Entry", "Price", "P/L", "P/L", "Shares", "P/L", "Profit Targe", "Stop", "Action"] },
    { h: "h-[43px]", cells: ["1", "ARLP", "4.89", "5.89", "1.00", "20.45%", "1000", "$1,000", "5.89 "] },
    { h: "h-[43px]", fill: "yellow", cells: ["1", "ARLP", "4.89", "16.14", "11.25", "230.06%", "1000", "$11,250", "", "13.00", "Maintain Stop"] },
    { h: "h-[43px]", fill: "yellow", cells: ["-1", "DELL", "50.25", "48.21", "2.04", "4.06%", "174", "$355", "44.50", "53.60", "Maintain Stop"] },
    { h: "h-[42px]", fill: "yellow", cells: ["-1", "DELL", "50.25", "48.21", "2.04", "4.06%", "174", "$355"] },
    { h: "h-[43px]", cells: ["1", "CENX", "25.53", "23.00", "(2.53)", "-9.91%", "200", "($506)", "30.00", "23.00", "Stopped-Near Miss"] },
    { h: "h-[43px]", cells: ["1", "CENX", "25.53", "23.00", "(2.53)", "-9.91%", "200", "($506)"] },
    { h: "h-[42px]", cells: ["1", "RES", "10.50", "12.50", "2.00", "19.05%", "500", "$1,000", "12.50"] },
    { h: "h-[43px]", fill: "yellow", cells: ["1", "RES", "10.50", "11.48", "0.98", "9.33%", "500", "$490", "", "10.50", "Maintain Stop"] },
    { h: "h-[43px]", fill: "yellow", cells: ["1", "SES", "9.30", "8.32", "(0.98)", "-10.54%", "426", "($417)", "11.65", "6.95", "Maintain Stop"] },
    { h: "h-[42px]", fill: "yellow", cells: ["1", "SES", "9.30", "8.32", "(0.98)", "-10.54%", "426", "($417)"] },
    { h: "h-[43px]", fill: "yellow", cells: ["1", "SGML", "17.35", "16.91", "(0.44)", "-2.54%", "299", "($131)", "20.70", "14.00", "Maintain Stop"] },
    { h: "h-[43px]", fill: "yellow", cells: ["1", "SGML", "17.35", "16.91", "(0.44)", "-2.54%", "299", "($131)"] },
    { h: "h-[42px]", cells: ["", "", "", "", "", "", "", "$|12,341"] },
    { h: "h-[42px]", cells: ["SETUPS", "Symbol", "", "Action", "Shares-100k", "", "Entry", "P.Stop", "IPT", "Risk", "Pattern"] },
    { h: "h-[59px]", fill: "orange", cells: ["4/21/22", "KOS", "", "BUY", "1818", "", "7.60", "6.50", "8.70", "1.10", "PB/TKO"] },
    { h: "h-[57px]", fill: "orange", cells: [] },
    { h: "h-[58px]", fill: "orange", cells: [] },
    { h: "h-[60px]", fill: "orange", cells: [] },
];

function cellClass(n: number, c: number, text: string) {
    const out = [];
    const numeric = text !== "$" && /^[-$(\d][\d.,$%/)]*$/.test(text.trim());
    if (n === 1) out.push("pl-[10px] text-left");
    else if (n === 5 && c === 0) out.push("pl-[18px] text-left");
    else if (!numeric) out.push(c < 2 ? "pl-1 text-left" : "pl-[5px] text-left");
    else if (text.startsWith("(")) out.push(c === 4 ? "text-right pr-[7px] text-[#e3131b]" : "text-right pr-[5px] text-[#e3131b]");
    else if (c === 4 || (c === 7 && n !== 21)) out.push("text-right pr-[12px]");
    else if (text.endsWith(" ")) out.push("text-right pr-[11px]");
    else out.push("text-right pr-[5px]");

    if ((c === 2 && n > 6) || (n === 21 && c > 5)) out.push("font-['Liberation_Serif',serif] text-[30px] [-webkit-text-stroke:1px_black]");
    else if (n === 20 && c === 9) out.push("font-['Liberation_Sans',sans-serif] text-[29px] [-webkit-text-stroke:1px_black]");
    else if (n < 5) out.push("font-normal text-[27px]");
    else out.push(c === 10 ? "font-bold text-[27px]" : "font-bold");
    return out.join(" ");
}

function Cell({ n, c, text, line }: { n: number; c: number; text: string; line: string }) {
    if (text.includes("|")) {
        const [sign, amount] = text.split("|");
        return (
            <td className={c === 7 ? "font-bold border-r border-t-2 border-b-4 border-r-[#d0d0d0] border-t-black border-b-black [border-bottom-style:double]" : `border-r border-b ${line}`}>
                <div className={`flex justify-between pl-[10px] ${c === 7 ? "pr-[12px] -mb-[3px]" : "pr-[14px]"}`}>
                    <span>{sign}</span>
                    <span>{amount}</span>
                </div>
            </td>
        );
    }
    return (
        <td colSpan={n === 4 && c === 0 ? 3 : 1} className={`${n === 20 && c === 4 ? "border-b" : "border-r border-b"} ${line} ${cellClass(n, c, text)}`}>
            {text}
        </td>
    );
}

function Sheet() {
    return (
        <div className="relative flex-1 overflow-hidden bg-white">
            <table className="table-fixed w-full border-separate border-spacing-0">
                <colgroup>
                    <col className="w-[41px]" />
                    {columns.map((c, i) => <col key={i} className={c.width} />)}
                </colgroup>
                <thead>
                    <tr className="h-[21px] bg-[#f3f3f3] text-sm leading-[18px] text-[#666] [&>th]:p-0 [&>th]:font-normal">
                        <th className="border-b border-r border-[#bbb]">
                            <svg viewBox="0 0 16 16" className="w-4 h-4 ml-auto mr-[2px]"><path d="M16 0v16H0z" fill="#b5b5b5" /></svg>
                        </th>
                        {columns.map((c, i) => (
                            <th
                                key={i}
                                className={c.name === "I" ? "bg-[#d5d4d4] text-[#187839] border-b-2 border-[#187839] font-semibold!" : "border-r border-b border-r-[#ccc] border-b-[#aaa]"}
                            >
                                {c.name}
                            </th>
                        ))}
                    </tr>
                </thead>
                <tbody className="font-['Lato',sans-serif] text-[26px] leading-[32px] text-black whitespace-nowrap [&_td]:overflow-hidden [&_td]:align-bottom [&_td]:pb-[2px]">
                    {rows.map((row, i) => {
                        const n = i + 1;
                        const line = row.fill === "yellow" ? "border-[#ffff2b]" : row.fill === "orange" ? "border-[#fab81c]" : "border-[#d0d0d0]";
                        const bg = row.fill === "yellow" ? "bg-[#ffff2b]" : row.fill === "orange" ? "bg-[#fab81c]" : "";
                        const span = n === 4 ? 9 : 11;
                        return (
                            <tr key={n} className={`${row.h} ${bg}`}>
                                <th className="p-0 align-bottom bg-[#f3f3f3] border-r border-b border-[#ccc] font-['Open_Sans',sans-serif] font-normal text-[15px] leading-[20px] text-[#666]">
                                    <span className="pr-1">{n < 24 ? n : ""}</span>
                                </th>
                                <td className={`border-b ${row.fill ? "" : "border-r"} ${line} ${n === 3 ? "[direction:rtl] pr-[12px]" : ""} ${n === 2 ? "[direction:rtl] pr-[4px]" : ""}`}>{n === 2 || n === 3 ? "e" : ""}</td>
                                {Array.from({ length: span }, (_, c) => (
                                    <Cell key={c} n={n} c={c} text={row.cells[c] ?? ""} line={line} />
                                ))}
                                <td className="bg-white border-b border-[#d0d0d0]" />
                            </tr>
                        );
                    })}
                </tbody>
            </table>
            <svg viewBox="0 0 20 20" className="absolute left-[697px] top-[58px] w-5 h-5"><path d="M7 1h6v5h6v7h-6v6H7v-6H1V6h6z" fill="#fff" stroke="#000" strokeWidth="1.800" /></svg>
            <svg viewBox="0 0 20 12" className="absolute left-[1778px] bottom-[5px] w-5 h-3" stroke="#444"><path d="M1 1h11v10H1z" fill="#e9c98a" /><path d="M9 3h10v7H9z" fill="#fff" /><path d="M14 5h2v3h-2z" fill="#333" /></svg>
        </div>
    );
}

export default function App() {
    return (
        <div className="h-screen flex overflow-hidden bg-black">
            <TradingPlatform />
            <main className={`${ui} flex-1 min-w-0 flex flex-col bg-[#f3f2f1]`}>
                <Bookmarks />
                <TitleBar />
                <Tabs />
                <Ribbon />
                <FormulaBar />
                <Sheet />
            </main>
        </div>
    );
}
